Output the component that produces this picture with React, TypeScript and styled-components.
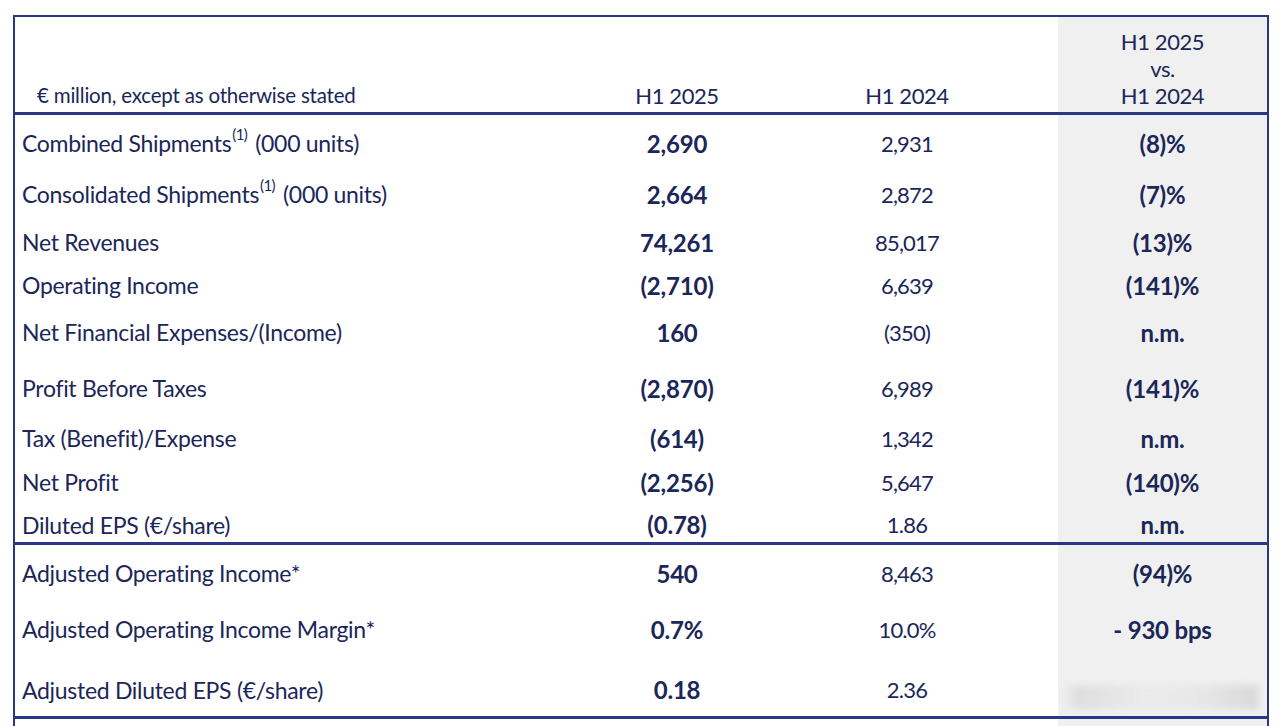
import React from "react";
import styled, { createGlobalStyle } from "styled-components";

const NAVY = "#1b2659";
const LINE = "#2b3780";
const GRAY = "#f0f0f0";

const Global = createGlobalStyle`
  html, body { margin: 0; padding: 0; background: #ffffff; }
  body { font-family: Lato, "Noto Sans", "Liberation Sans", sans-serif; color: ${NAVY}; overflow: hidden; }
`;

const Page = styled.div`
  height: 726px;
  overflow: hidden;
  padding: 15px 0 0 13px;
  box-sizing: border-box;
`;

const Table = styled.div`
  width: 1256px;
  box-sizing: border-box;
  border-top: 2px solid ${LINE};
  border-left: 2px solid ${LINE};
  border-right: 2px solid ${LINE};
  display: flex;
  flex-direction: column;
`;

const COLS = "547px 230px 266px 1fr";

const HeaderRow = styled.div`
  display: grid;
  grid-template-columns: ${COLS};
  height: 95px;
  border-bottom: 3px solid ${LINE};
`;

const Row = styled.div<{ $h: number; $divider?: boolean; $pt?: number }>`
  display: grid;
  grid-template-columns: ${COLS};
  height: ${(p) => p.$h}px;
  border-bottom: ${(p) => (p.$divider ? `3px solid ${LINE}` : "none")};
  & > div {
    padding-top: ${(p) => p.$pt ?? 0}px;
  }
`;

const HeadCell = styled.div<{ $shade?: boolean; $left?: boolean; $pr?: number }>`
  display: flex;
  flex-direction: column;
  justify-content: flex-end;
  align-items: ${(p) => (p.$left ? "flex-start" : "center")};
  text-align: center;
  padding: 0 ${(p) => p.$pr ?? 0}px 3px ${(p) => (p.$left ? 22 : 0)}px;
  background: ${(p) => (p.$shade ? GRAY : "transparent")};
  font-size: 22px;
  line-height: 27px;
  letter-spacing: -0.4px;
  white-space: nowrap;
`;

const SubHead = styled.span`
  font-size: 20.5px;
  letter-spacing: -0.2px;
`;

const Label = styled.div`
  display: flex;
  align-items: center;
  padding-left: 7px;
  font-size: 23px;
  letter-spacing: -0.3px;
  white-space: pre;
`;

const Sup = styled.span`
  font-size: 15px;
  position: relative;
  top: -9px;
  margin: 0 8px 0 1px;
  letter-spacing: -0.6px;
`;

const Value = styled.div<{ $bold?: boolean; $shade?: boolean; $pr?: number }>`
  display: flex;
  align-items: center;
  justify-content: center;
  padding-right: ${(p) => p.$pr ?? 0}px;
  background: ${(p) => (p.$shade ? GRAY : "transparent")};
  font-size: ${(p) => (p.$bold ? "24px" : "22px")};
  font-weight: ${(p) => (p.$bold ? 700 : 400)};
  letter-spacing: ${(p) => (p.$bold ? "-0.2px" : "-0.8px")};
  white-space: nowrap;
  position: relative;
`;

const Smudge = styled.div`
  position: absolute;
  left: 6px;
  right: 8px;
  top: 28px;
  height: 24px;
  background: linear-gradient(90deg, rgba(225,225,225,0.3), rgba(218,218,218,0.8) 8%, rgba(230,230,230,0.5) 40%, rgba(226,226,226,0.6) 70%, rgba(216,216,216,0.9) 95%);
  filter: blur(3px);
`;

type RowData = {
  label: React.ReactNode;
  a: string;
  b: string;
  c: string;
  h: number;
  pt?: number;
  divider?: boolean;
  smudge?: boolean;
};

const rows: RowData[] = [
  { label: <>Combined Shipments<Sup>(1)</Sup>(000 units)</>, a: "2,690", b: "2,931", c: "(8)%", h: 56 },
  { label: <>Consolidated Shipments<Sup>(1)</Sup>(000 units)</>, a: "2,664", b: "2,872", c: "(7)%", h: 46 },
  { label: "Net Revenues", a: "74,261", b: "85,017", c: "(13)%", h: 50 },
  { label: "Operating Income", a: "(2,710)", b: "6,639", c: "(141)%", h: 36 },
  { label: "Net Financial Expenses/(Income)", a: "160", b: "(350)", c: "n.m.", h: 58 },
  { label: "Profit Before Taxes", a: "(2,870)", b: "6,989", c: "(141)%", h: 54 },
  { label: "Tax (Benefit)/Expense", a: "(614)", b: "1,342", c: "n.m.", h: 46 },
  { label: "Net Profit", a: "(2,256)", b: "5,647", c: "(140)%", h: 42 },
  { label: "Diluted EPS (€/share)", a: "(0.78)", b: "1.86", c: "n.m.", h: 39, pt: 4, divider: true },
  { label: "Adjusted Operating Income*", a: "540", b: "8,463", c: "(94)%", h: 56 },
  { label: "Adjusted Operating Income Margin*", a: "0.7%", b: "10.0%", c: "- 930 bps", h: 56 },
  { label: "Adjusted Diluted EPS (€/share)", a: "0.18", b: "2.36", c: "", h: 59, pt: 6, divider: true, smudge: true },
  { label: "", a: "", b: "", c: "", h: 40 },
];

export default function App() {
  return (
    <>
      <Global />
      <Page>
        <Table>
          <HeaderRow>
            <HeadCell $left>
              <SubHead>€ million, except as otherwise stated</SubHead>
            </HeadCell>
            <HeadCell>H1 2025</HeadCell>
            <HeadCell $pr={36}>H1 2024</HeadCell>
            <HeadCell $shade>
              <span>H1 2025</span>
              <span>vs.</span>
              <span>H1 2024</span>
            </HeadCell>
          </HeaderRow>
          {rows.map((r, i) => (
            <Row key={i} $h={r.h} $pt={r.pt} $divider={r.divider}>
              <Label>{r.label}</Label>
              <Value $bold>{r.a}</Value>
              <Value $pr={36}>{r.b}</Value>
              <Value $bold $shade>
                {r.c}
                {r.smudge && <Smudge />}
              </Value>
            </Row>
          ))}
        </Table>
      </Page>
    </>
  );
}
